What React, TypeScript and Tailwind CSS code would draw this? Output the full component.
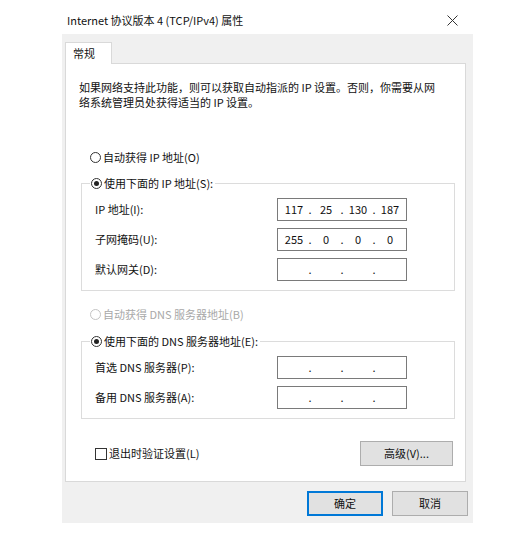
import React from 'react';

const font = { fontFamily: '"Noto Sans CJK SC", "Noto Sans", sans-serif' };

function Radio({ checked = false, disabled = false }: { checked?: boolean; disabled?: boolean }) {
    return (
        <span
            className={`w-[11px] h-[11px] rounded-full border bg-white flex items-center justify-center shrink-0 ${disabled ? 'border-[#c4c4c4]' : 'border-[#333333]'}`}
        >
            {checked && <span className="w-[5px] h-[5px] rounded-full bg-[#222222]"></span>}
        </span>
    );
}

function IpField({ parts }: { parts: string[] }) {
    return (
        <div className="w-[130px] h-[23px] border border-[#7a7a7a] bg-white flex items-center pl-[3px] text-[11px] text-[#111111]">
            {parts.map((p, i) => (
                <React.Fragment key={i}>
                    <span className="w-[26px] text-center">{p}</span>
                    {i < 3 && <span className="w-[6px] text-center">.</span>}
                </React.Fragment>
            ))}
        </div>
    );
}

function FieldRow({ label, parts }: { label: string; parts: string[] }) {
    return (
        <div className="flex items-center h-[23px]">
            <span className="w-[195px] pl-[13px] text-[11px] text-[#111111]">{label}</span>
            <IpField parts={parts} />
        </div>
    );
}

export default function App() {
    const empty = ['', '', '', ''];
    return (
        <div className="w-[532px] h-[533px] bg-white leading-[15px]" style={font}>
            <div className="ml-[62px] w-[411px]">
                {/* Title bar */}
                <div className="h-[34px] flex items-start justify-between">
                    <span className="pl-[5px] pt-[13px] text-[11px] leading-[15px] text-[#111111]">
                        Internet 协议版本 4 (TCP/IPv4) 属性
                    </span>
                    <svg width="11" height="11" viewBox="0 0 11 11" className="mt-[15px] mr-[15px]">
                        <path d="M0.5 0.5 L10.5 10.5 M10.5 0.5 L0.5 10.5" stroke="#333333" strokeWidth="1" />
                    </svg>
                </div>

                {/* Dialog body */}
                <div className="h-[489px] bg-[#f0f0f0] pt-[8px]">
                    <div className="ml-[3px] w-[401px]">
                        <div className="relative z-10 -mb-px w-[47px] h-[22px] bg-white border border-b-0 border-[#d9d9d9] pl-[7px] pt-[3px] text-[11px] leading-[15px] text-[#111111]">
                            常规
                        </div>
                        <div className="h-[419px] bg-white border border-[#d9d9d9] flex flex-col">
                            <p className="pt-[16px] pl-[13px] text-[11px] leading-[15px] text-[#111111] whitespace-nowrap">
                                如果网络支持此功能，则可以获取自动指派的 IP 设置。否则，你需要从网
                                <br />
                                络系统管理员处获得适当的 IP 设置。
                            </p>

                            <div className="mt-[39px] ml-[24px] h-[16px] flex items-center gap-[2px] text-[11px] text-[#111111]">
                                <Radio />
                                <span>自动获得 IP 地址(O)</span>
                            </div>

                            <div className="mt-[18px] ml-[15px] w-[374px] border border-[#dcdcdc] pb-[9px]">
                                <div className="-mt-[9px] ml-[8px] h-[16px] w-fit flex items-center gap-[2px] bg-white pr-[2px] pl-px text-[11px] text-[#111111]">
                                    <Radio checked />
                                    <span>使用下面的 IP 地址(S):</span>
                                </div>
                                <div className="mt-[7px] flex flex-col gap-[7px]">
                                    <FieldRow label="IP 地址(I):" parts={['117', '25', '130', '187']} />
                                    <FieldRow label="子网掩码(U):" parts={['255', '0', '0', '0']} />
                                    <FieldRow label="默认网关(D):" parts={empty} />
                                </div>
                            </div>

                            <div className="mt-[15px] ml-[24px] h-[16px] flex items-center gap-[2px] text-[11px] text-[#a8a8a8]">
                                <Radio disabled />
                                <span>自动获得 DNS 服务器地址(B)</span>
                            </div>

                            <div className="mt-[19px] ml-[15px] w-[374px] border border-[#dcdcdc] pb-[9px]">
                                <div className="-mt-[9px] ml-[8px] h-[16px] w-fit flex items-center gap-[2px] bg-white pr-[2px] pl-px text-[11px] text-[#111111]">
                                    <Radio checked />
                                    <span>使用下面的 DNS 服务器地址(E):</span>
                                </div>
                                <div className="mt-[7px] flex flex-col gap-[7px]">
                                    <FieldRow label="首选 DNS 服务器(P):" parts={empty} />
                                    <FieldRow label="备用 DNS 服务器(A):" parts={empty} />
                                </div>
                            </div>

                            <div className="mt-[22px] flex items-center justify-between pl-[29px] pr-[12px]">
                                <div className="flex items-center gap-[2px] text-[11px] text-[#111111]">
                                    <span className="w-[12px] h-[12px] border border-[#333333] bg-white"></span>
                                    <span>退出时验证设置(L)</span>
                                </div>
                                <button className="w-[93px] h-[25px] bg-[#e1e1e1] border border-[#adadad] text-[11px] text-[#111111]">
                                    高级(V)...
                                </button>
                            </div>
                        </div>
                    </div>

                    <div className="mt-[9px] flex justify-end gap-[9px] pr-[5px]">
                        <button className="w-[76px] h-[25px] bg-[#e1e1e1] border-2 border-[#0078d7] text-[11px] text-[#111111]">
                            确定
                        </button>
                        <button className="w-[76px] h-[25px] bg-[#e1e1e1] border border-[#adadad] text-[11px] text-[#111111]">
                            取消
                        </button>
                    </div>
                </div>
            </div>
        </div>
    );
}
